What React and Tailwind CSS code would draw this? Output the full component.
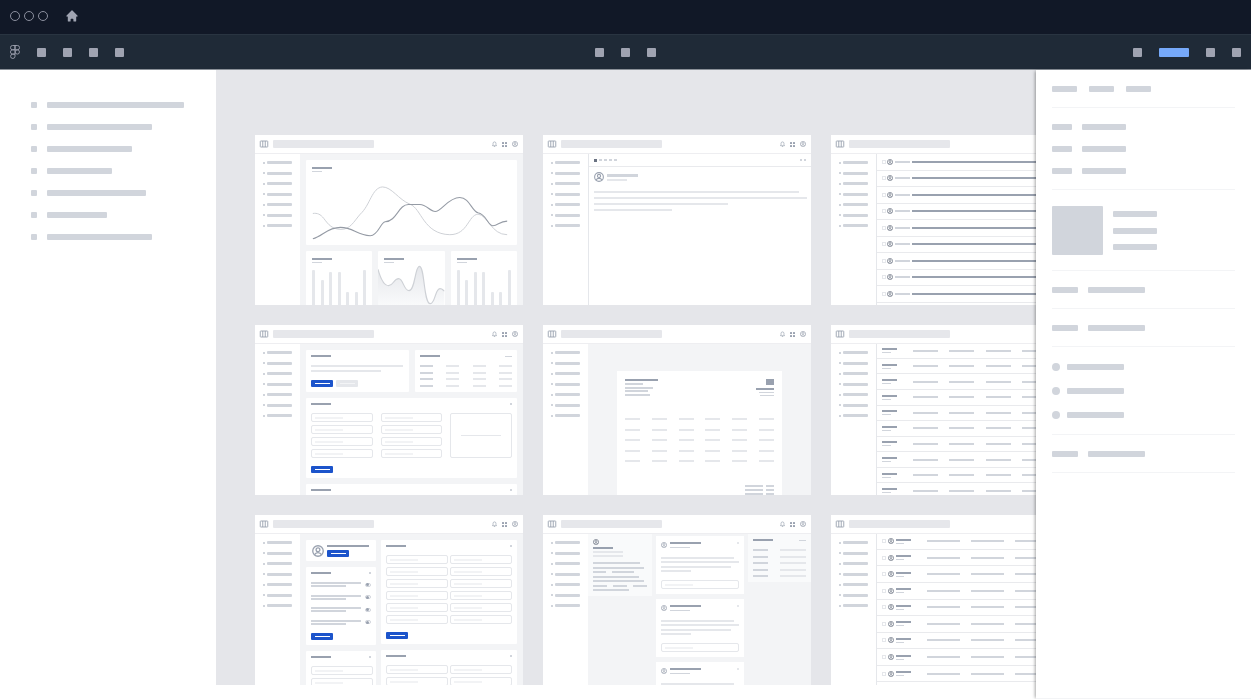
import clsx from 'clsx';

const LAYERS = ['w-[137px]', 'w-[105px]', 'w-[85px]', 'w-[65px]', 'w-[99px]', 'w-[60px]', 'w-[105px]'];

const range = n => Array.from({ length: n }, (_, i) => i);

/* ---------- small pieces ---------- */

function Bar({ className }) {
  return <span className={clsx('block shrink-0', className)} />;
}

function Avatar({ className }) {
  return (
    <svg viewBox="0 0 24 24" fill="none" stroke="currentColor" strokeWidth="2.6" className={clsx('shrink-0', className)}>
      <circle cx="12" cy="12" r="10.5" />
      <circle cx="12" cy="9.5" r="3.8" />
      <path d="M5 19.5c1.5-3.2 4-4.3 7-4.3s5.500 1.100 7 4.300" />
    </svg>
  );
}

function HomeIcon() {
  return (
    <svg viewBox="0 0 20 20" fill="currentColor" className="size-[14px]">
      <path d="M10.707 2.293a1 1 0 00-1.414 0l-7 7a1 1 0 001.414 1.414L4 10.414V17a1 1 0 001 1h2a1 1 0 001-1v-2a1 1 0 011-1h2a1 1 0 011 1v2a1 1 0 001 1h2a1 1 0 001-1v-6.586l.293.293a1 1 0 001.414-1.414l-7-7z" />
    </svg>
  );
}

function FigmaIcon() {
  return (
    <svg viewBox="0 0 20 28" fill="none" stroke="currentColor" strokeWidth="1.8" className="h-[14px] w-[10px] shrink-0">
      <path d="M10 1H5.200a4.300 4.300 0 0 0 0 8.600H10z" />
      <path d="M10 1h4.800a4.300 4.300 0 0 1 0 8.600H10z" />
      <path d="M10 9.600H5.200a4.300 4.300 0 0 0 0 8.600H10z" />
      <circle cx="14.600" cy="13.900" r="4.300" />
      <path d="M10 18.200H5.200a4.400 4.400 0 1 0 4.800 4.400z" />
    </svg>
  );
}

function LogoIcon() {
  return (
    <svg viewBox="0 0 16 12" fill="none" stroke="currentColor" strokeWidth="1.8" className="h-[6px] w-[8px] shrink-0 overflow-visible text-gray-400">
      <rect x="0.500" y="0" width="15" height="12" rx="1" />
      <path d="M5.500 0v12M10.500 0v12" />
    </svg>
  );
}

function BellIcon() {
  return (
    <svg viewBox="0 0 12 14" fill="none" stroke="currentColor" strokeWidth="1.6" className="h-[6px] w-[5px]">
      <path d="M1 11h10L9.500 8.500V5.500a3.500 3.500 0 0 0-7 0v3zM4.500 13h3" />
    </svg>
  );
}

function AppsIcon() {
  return (
    <svg viewBox="0 0 10 10" fill="currentColor" className="size-[5px]">
      <rect width="4" height="4" rx="1" />
      <rect x="6" width="4" height="4" rx="1" />
      <rect y="6" width="4" height="4" rx="1" />
      <rect x="6" y="6" width="4" height="4" rx="1" />
    </svg>
  );
}

function ToolButton() {
  return <button type="button" className="size-[9px] shrink-0 rounded-[1px] bg-[#9fa3b1]" />;
}

function PrimaryButton() {
  return (
    <button type="button" className="flex h-[7px] w-[22px] shrink-0 items-center justify-center rounded-[1px] bg-[#1c54cb]">
      <Bar className="h-px w-[15px] bg-white" />
    </button>
  );
}

function Field({ className }) {
  return (
    <label className={clsx('relative block', className)}>
      <input type="text" className="block size-full rounded-[2px] border border-gray-200 bg-white" />
      <span className="absolute left-[4px] top-1/2 h-px w-[28px] -translate-y-1/2 bg-gray-200" />
    </label>
  );
}

function Check() {
  return <input type="checkbox" className="block size-[4px] shrink-0 appearance-none border border-gray-200" />;
}

function CardTitle() {
  return (
    <div className="flex items-center justify-between">
      <Bar className="h-[2px] w-[20px] bg-gray-400" />
      <Bar className="size-[2px] bg-gray-300" />
    </div>
  );
}

/* ---------- artboard shell ---------- */

function Artboard({ className, children }) {
  return (
    <article className="flex h-[170px] flex-col overflow-hidden bg-white">
      <header className="flex h-[19px] shrink-0 items-center border-b border-[#eeeef1] px-[5px]">
        <LogoIcon />
        <Bar className="ml-[5px] h-[8px] w-[101px] rounded-[1px] bg-[#e6e7eb]" />
        <div className="ml-auto flex items-center gap-[5px] text-gray-400">
          <BellIcon />
          <AppsIcon />
          <Avatar className="size-[6px]" />
        </div>
      </header>
      <div className="flex min-h-0 flex-1">
        <nav className="w-[45px] shrink-0 pl-[8px] pt-[7px]">
          <ul className="flex h-[66px] flex-col justify-between">
            {range(7).map(i => (
              <li key={i} className="flex items-center gap-[2px]">
                <Bar className="size-[2px] bg-gray-300" />
                <Bar className="h-[3px] w-[25px] rounded-[1px] bg-gray-300" />
              </li>
            ))}
          </ul>
        </nav>
        <div className={clsx('min-w-0 flex-1 overflow-hidden', className)}>{children}</div>
      </div>
    </article>
  );
}

/* ---------- dashboard ---------- */

function ChartHeading() {
  return (
    <div className="flex flex-col gap-[2px]">
      <Bar className="h-[2px] w-[20px] bg-gray-400" />
      <Bar className="h-px w-[10px] bg-gray-300" />
    </div>
  );
}

function BarCard() {
  const heights = ['h-[35px]', 'h-[25px]', 'h-[33px]', 'h-[33px]', 'h-[13px]', 'h-[13px]', 'h-[35px]'];
  return (
    <div className="flex flex-col rounded-t-[1px] bg-white px-[6px] pt-[7px]">
      <ChartHeading />
      <div className="flex flex-1 items-end justify-between">
        {heights.map((h, i) => <Bar key={i} className={clsx('w-[3px] rounded-t-[1px] bg-gray-200', h)} />)}
      </div>
    </div>
  );
}

function DashboardBoard() {
  return (
    <Artboard className="flex flex-col gap-[6px] bg-gray-100 px-[6px] pt-[6px]">
      <div className="shrink-0 rounded-[1px] bg-white px-[6px] pb-[5px] pt-[7px]">
        <ChartHeading />
        <svg viewBox="186 140 597 190" fill="none" className="mt-[5px] h-[63px] w-full">
          <path
            d="M187 250C200 248 210 252 220 265C235 285 245 297 272 298C300 298 310 275 330 252C360 225 365 172 397 170C425 170 445 208 480 222C515 235 520 312 600 314C655 314 655 255 685 252C715 255 725 314 773 314"
            stroke="#ced1d6"
            strokeWidth="3"
          />
          <path
            d="M187 326C215 320 230 292 270 292C310 292 320 316 360 317C385 316 390 278 405 275C440 274 445 223 475 223L510 223C530 223 540 244 556 244C575 244 595 202 630 202C660 202 665 242 685 248C710 252 715 287 730 287C745 287 750 273 773 273"
            stroke="#959ba5"
            strokeWidth="3.200"
          />
        </svg>
      </div>
      <div className="grid min-h-0 flex-1 grid-cols-3 gap-[6px]">
        <BarCard />
        <div className="flex flex-col rounded-t-[1px] bg-white pt-[7px]">
          <div className="px-[6px]"><ChartHeading /></div>
          <svg viewBox="386 399 199 126" preserveAspectRatio="none" fill="none" className="mt-auto h-[42px] w-full">
            <defs>
              <linearGradient id="areaFill" x1="0" y1="0" x2="0" y2="1">
                <stop offset="0" stopColor="#e5e7eb" />
                <stop offset="1" stopColor="#f9fafb" />
              </linearGradient>
            </defs>
            <path
              d="M386 418C395 450 405 467 418 467C432 467 433 446 448 446C462 446 463 482 479 482C497 482 497 409 510 409C527 409 522 521 543 521C558 521 557 476 572 476C580 476 582 482 585 483V525H386Z"
              fill="url(#areaFill)"
            />
            <path
              d="M386 418C395 450 405 467 418 467C432 467 433 446 448 446C462 446 463 482 479 482C497 482 497 409 510 409C527 409 522 521 543 521C558 521 557 476 572 476C580 476 582 482 585 483"
              stroke="#ced1d6"
              strokeWidth="3.500"
            />
          </svg>
        </div>
        <BarCard />
      </div>
    </Artboard>
  );
}

/* ---------- mail ---------- */

function MessageBoard() {
  return (
    <Artboard className="border-l border-gray-200">
      <div className="flex h-[13px] items-center gap-[2px] border-b border-[#e9eaed] px-[5px]">
        <Bar className="size-[3px] bg-gray-500" />
        {range(4).map(i => <Bar key={i} className="h-[2px] w-[3px] bg-gray-300" />)}
        <Bar className="ml-auto size-[2px] bg-gray-300" />
        <Bar className="size-[2px] bg-gray-300" />
      </div>
      <div className="px-[5px] pt-[5px]">
        <div className="flex items-center gap-[3px]">
          <Avatar className="size-[10px] text-gray-400" />
          <div className="flex flex-col gap-[2px]">
            <Bar className="h-[3px] w-[31px] bg-gray-300" />
            <Bar className="h-[2px] w-[20px] bg-gray-200" />
          </div>
        </div>
        <div className="mt-[9px] flex flex-col gap-[4px]">
          <Bar className="h-[2px] w-[205px] bg-gray-200" />
          <Bar className="h-[2px] w-[213px] bg-gray-200" />
          <Bar className="h-[2px] w-[134px] bg-gray-200" />
          <Bar className="h-[2px] w-[78px] bg-gray-200" />
        </div>
      </div>
    </Artboard>
  );
}

function InboxBoard() {
  return (
    <Artboard className="border-l border-gray-200">
      <ul className="flex h-[165px] flex-col">
        {range(10).map(i => (
          <li key={i} className="flex flex-1 items-center border-b border-[#e9eaed] pl-[5px]">
            <Check />
            <Avatar className="ml-px size-[6px] text-gray-500" />
            <Bar className="ml-[2px] h-[2px] w-[15px] bg-gray-300" />
            <span className="ml-[2px] block h-[2px] flex-1 bg-gray-400" />
          </li>
        ))}
      </ul>
    </Artboard>
  );
}

/* ---------- billing ---------- */

function BillingBoard() {
  return (
    <Artboard className="bg-gray-100 px-[6px] pt-[6px]">
      <div className="grid grid-cols-2 gap-[6px]">
        <div className="h-[42px] rounded-[1px] bg-white p-[5px]">
          <Bar className="h-[2px] w-[20px] bg-gray-400" />
          <Bar className="mt-[8px] h-[2px] w-[92px] bg-gray-200" />
          <Bar className="mt-[3px] h-[2px] w-[70px] bg-gray-200" />
          <div className="mt-[8px] flex gap-[3px]">
            <PrimaryButton />
            <button type="button" className="flex h-[7px] w-[22px] items-center justify-center rounded-[1px] bg-gray-200">
              <Bar className="h-px w-[15px] bg-gray-100" />
            </button>
          </div>
        </div>
        <div className="h-[42px] rounded-[1px] bg-white p-[5px]">
          <div className="flex items-center justify-between">
            <Bar className="h-[2px] w-[20px] bg-gray-400" />
            <Bar className="h-px w-[7px] bg-gray-300" />
          </div>
          <div className="mt-[8px] flex h-[22px] flex-col justify-between">
            {range(4).map(i => (
              <div key={i} className="flex justify-between">
                <Bar className="h-[2px] w-[13px] bg-gray-300" />
                <Bar className="h-[2px] w-[13px] bg-gray-200" />
                <Bar className="h-[2px] w-[13px] bg-gray-200" />
                <Bar className="h-[2px] w-[13px] bg-gray-200" />
              </div>
            ))}
          </div>
        </div>
      </div>
      <div className="mt-[6px] h-[80px] rounded-[1px] bg-white p-[5px]">
        <CardTitle />
        <div className="mt-[8px] grid grid-cols-3 gap-[8px]">
          {range(2).map(col => (
            <div key={col} className="flex flex-col gap-[3px]">
              {range(4).map(i => <Field key={i} className="h-[9px]" />)}
            </div>
          ))}
          <div className="flex items-center justify-center rounded-[2px] border border-gray-200">
            <Bar className="h-px w-[40px] bg-gray-200" />
          </div>
        </div>
        <div className="mt-[8px] flex"><PrimaryButton /></div>
      </div>
      <div className="mt-[6px] h-[80px] rounded-[1px] bg-white p-[5px]">
        <CardTitle />
      </div>
    </Artboard>
  );
}

/* ---------- invoice ---------- */

function InvoiceBoard() {
  return (
    <Artboard className="bg-gray-100">
      <div className="mx-auto mt-[27px] h-[140px] w-[165px] bg-white p-[8px]">
        <div className="flex justify-between">
          <div className="flex h-[17px] flex-col justify-between">
            <Bar className="h-[2px] w-[33px] bg-gray-400" />
            <Bar className="h-[2px] w-[18px] bg-gray-300" />
            <Bar className="h-[2px] w-[28px] bg-gray-300" />
            <Bar className="h-[2px] w-[23px] bg-gray-300" />
            <Bar className="h-[2px] w-[25px] bg-gray-300" />
          </div>
          <div className="flex flex-col items-end">
            <Bar className="h-[6px] w-[8px] bg-gray-400" />
            <Bar className="mt-[3px] h-[2px] w-[18px] bg-gray-400" />
            <Bar className="mt-[2px] h-px w-[15px] bg-gray-300" />
            <Bar className="mt-[2px] h-px w-[14px] bg-gray-300" />
          </div>
        </div>
        <div className="mt-[22px] flex h-[44px] flex-col justify-between">
          {range(5).map(row => (
            <div key={row} className="flex justify-between">
              {range(6).map(i => <Bar key={i} className="h-[2px] w-[15px] bg-gray-200" />)}
            </div>
          ))}
        </div>
        <div className="mt-[23px] flex flex-col gap-[2px]">
          {range(3).map(i => (
            <div key={i} className="flex justify-end gap-[3px]">
              <Bar className="h-[2px] w-[18px] bg-gray-300" />
              <Bar className="h-[2px] w-[8px] bg-gray-300" />
            </div>
          ))}
        </div>
      </div>
    </Artboard>
  );
}

/* ---------- tables ---------- */

function ProductsBoard() {
  return (
    <Artboard className="border-l border-gray-200">
      <table className="h-[155px] w-[218px] table-fixed border-collapse">
        <colgroup>
          <col className="w-[36px]" />
        </colgroup>
        <tbody>
          {range(10).map(row => (
            <tr key={row} className="border-b border-[#e9eaed]">
              <td className="p-0 pl-[5px] align-middle">
                <Bar className="h-[2px] w-[15px] bg-gray-400" />
                <Bar className="mt-[2px] h-px w-[9px] bg-gray-300" />
              </td>
              {range(5).map(i => (
                <td key={i} className="p-0 align-middle">
                  <Bar className="h-[2px] w-[25px] bg-gray-300" />
                </td>
              ))}
            </tr>
          ))}
        </tbody>
      </table>
    </Artboard>
  );
}

function UsersBoard() {
  return (
    <Artboard className="border-l border-gray-200">
      <table className="h-[165px] w-[226px] table-fixed border-collapse">
        <colgroup>
          <col className="w-[50px]" />
        </colgroup>
        <tbody>
          {range(10).map(row => (
            <tr key={row} className="border-b border-[#e9eaed]">
              <td className="p-0 pl-[5px] align-middle">
                <div className="flex items-center">
                  <Check />
                  <Avatar className="ml-[2px] size-[6px] text-gray-500" />
                  <div className="ml-[2px]">
                    <Bar className="h-[2px] w-[15px] bg-gray-400" />
                    <Bar className="mt-[2px] h-px w-[8px] bg-gray-300" />
                  </div>
                </div>
              </td>
              {range(4).map(i => (
                <td key={i} className="p-0 align-middle">
                  <Bar className="h-[2px] w-[33px] bg-gray-300" />
                </td>
              ))}
            </tr>
          ))}
        </tbody>
      </table>
    </Artboard>
  );
}

/* ---------- settings ---------- */

function Toggle() {
  return (
    <label className="flex h-[4px] w-[6px] items-center rounded-full border border-gray-300">
      <input type="checkbox" role="switch" className="block size-[3px] shrink-0 appearance-none rounded-full bg-gray-400" />
    </label>
  );
}

function FieldPairs({ rows }) {
  return (
    <div className="mt-[8px] grid grid-cols-2 gap-x-[2px] gap-y-[3px]">
      {range(rows * 2).map(i => <Field key={i} className="h-[9px]" />)}
    </div>
  );
}

function SettingsBoard() {
  return (
    <Artboard className="flex gap-[5px] bg-gray-100 px-[6px] pt-[6px]">
      <div className="flex w-[70px] shrink-0 flex-col gap-[6px]">
        <div className="flex h-[21px] shrink-0 items-center gap-[3px] rounded-[1px] bg-white pl-[6px]">
          <Avatar className="size-[12px] text-gray-400" />
          <div>
            <Bar className="h-[2px] w-[42px] bg-gray-400" />
            <div className="mt-[3px] flex"><PrimaryButton /></div>
          </div>
        </div>
        <div className="h-[78px] shrink-0 rounded-[1px] bg-white p-[5px]">
          <CardTitle />
          <div className="mt-[8px] flex h-[43px] flex-col justify-between">
            {range(4).map(i => (
              <div key={i} className="flex items-center justify-between">
                <div className="flex flex-col gap-px">
                  <Bar className="h-[2px] w-[50px] bg-gray-300" />
                  <Bar className="h-[2px] w-[35px] bg-gray-300" />
                </div>
                <Toggle />
              </div>
            ))}
          </div>
          <div className="mt-[8px] flex"><PrimaryButton /></div>
        </div>
        <div className="h-[60px] shrink-0 rounded-[1px] bg-white py-[5px] pl-[5px] pr-[3px]">
          <div className="pr-[2px]"><CardTitle /></div>
          <div className="mt-[8px] flex flex-col gap-[3px]">
            <Field className="h-[9px]" />
            <Field className="h-[9px]" />
          </div>
        </div>
      </div>
      <div className="flex min-w-0 flex-1 flex-col gap-[6px]">
        <div className="h-[104px] shrink-0 rounded-[1px] bg-white p-[5px]">
          <CardTitle />
          <FieldPairs rows={6} />
          <div className="mt-[8px] flex"><PrimaryButton /></div>
        </div>
        <div className="h-[60px] shrink-0 rounded-[1px] bg-white p-[5px]">
          <CardTitle />
          <FieldPairs rows={2} />
        </div>
      </div>
    </Artboard>
  );
}

/* ---------- feed ---------- */

function PostCard() {
  return (
    <div className="h-[58px] shrink-0 bg-white px-[5px] pt-[6px]">
      <div className="flex gap-[3px]">
        <Avatar className="size-[6px] text-gray-400" />
        <div className="flex flex-col gap-[3px]">
          <Bar className="h-[2px] w-[31px] bg-gray-400" />
          <Bar className="h-px w-[20px] bg-gray-300" />
        </div>
        <Bar className="ml-auto size-[2px] bg-gray-200" />
      </div>
      <div className="mt-[9px] flex h-[15px] flex-col justify-between">
        <Bar className="h-[2px] w-[73px] bg-gray-200" />
        <Bar className="h-[2px] w-[78px] bg-gray-200" />
        <Bar className="h-[2px] w-[70px] bg-gray-200" />
        <Bar className="h-[2px] w-[30px] bg-gray-200" />
      </div>
      <Field className="mt-[8px] h-[9px]" />
    </div>
  );
}

function FeedBoard() {
  return (
    <Artboard className="flex items-start gap-[4px] bg-gray-100">
      <div className="w-[64px] shrink-0 bg-gray-50 p-[5px]">
        <Avatar className="size-[6px] text-gray-500" />
        <Bar className="mt-[2px] h-[2px] w-[20px] bg-gray-400" />
        <Bar className="mt-[2px] h-[2px] w-[30px] bg-gray-200" />
        <Bar className="mt-[2px] h-[2px] w-[30px] bg-gray-200" />
        <div className="mt-[5px] flex h-[29px] flex-col justify-between">
          <Bar className="h-[2px] w-[47px] bg-gray-300" />
          <Bar className="h-[2px] w-[51px] bg-gray-300" />
          <div className="flex gap-[6px]">
            <Bar className="h-[2px] w-[13px] bg-gray-300" />
            <Bar className="h-[2px] w-[22px] bg-gray-300" />
          </div>
          <Bar className="h-[2px] w-[46px] bg-gray-300" />
          <Bar className="h-[2px] w-[51px] bg-gray-300" />
          <div className="flex gap-[6px]">
            <Bar className="h-[2px] w-[14px] bg-gray-300" />
            <Bar className="h-[2px] w-[14px] bg-gray-300" />
            <Bar className="h-[2px] w-[14px] bg-gray-300" />
          </div>
          <Bar className="h-[2px] w-[36px] bg-gray-300" />
        </div>
      </div>
      <div className="flex w-[88px] shrink-0 flex-col gap-[5px] pt-[2px]">
        <PostCard />
        <PostCard />
        <PostCard />
      </div>
      <div className="h-[48px] flex-1 bg-gray-50 p-[5px]">
        <div className="flex items-center justify-between">
          <Bar className="h-[2px] w-[20px] bg-gray-400" />
          <Bar className="h-px w-[7px] bg-gray-300" />
        </div>
        <div className="mt-[8px] flex h-[28px] flex-col justify-between">
          {range(5).map(i => (
            <div key={i} className="flex justify-between">
              <Bar className="h-[2px] w-[15px] bg-gray-300" />
              <Bar className="h-[2px] w-[26px] bg-gray-200" />
            </div>
          ))}
        </div>
      </div>
    </Artboard>
  );
}

/* ---------- editor chrome ---------- */

function TitleBar() {
  return (
    <div className="flex h-[34px] shrink-0 items-center bg-[#111827] px-[10px] pb-[2px]">
      <div className="flex gap-[4px]">
        {range(3).map(i => <button key={i} type="button" className="size-[10px] rounded-full border border-[#8b8f9e]" />)}
      </div>
      <button type="button" className="ml-[17px] text-[#9fa3b1]"><HomeIcon /></button>
    </div>
  );
}

function Toolbar() {
  return (
    <div className="flex h-[36px] shrink-0 items-center border-b border-t border-b-[#8a9098] border-t-[#293441] bg-[#1f2a37] px-[10px]">
      <div className="flex flex-1 items-center gap-[17px] text-[#9fa3b1]">
        <FigmaIcon />
        {range(4).map(i => <ToolButton key={i} />)}
      </div>
      <div className="flex gap-[17px]">
        {range(3).map(i => <ToolButton key={i} />)}
      </div>
      <div className="flex flex-1 items-center justify-end gap-[17px]">
        <ToolButton />
        <button type="button" className="h-[9px] w-[30px] rounded-[1px] bg-[#76a9fa]" />
        <ToolButton />
        <ToolButton />
      </div>
    </div>
  );
}

function LayersPanel() {
  return (
    <aside className="w-[216px] shrink-0 bg-white pl-[31px] pt-[32px]">
      <ul className="flex flex-col gap-4">
        {LAYERS.map((w, i) => (
          <li key={i} className="flex gap-[10px]">
            <Bar className="size-[6px] rounded-[1px] bg-gray-300" />
            <Bar className={clsx('h-[6px] rounded-[1px] bg-gray-300', w)} />
          </li>
        ))}
      </ul>
    </aside>
  );
}

function PropRow({ label, value }) {
  return (
    <div className="flex gap-[10px]">
      <Bar className={clsx('h-[6px] rounded-[1px] bg-gray-300', label)} />
      <Bar className={clsx('h-[6px] rounded-[1px] bg-gray-300', value)} />
    </div>
  );
}

function PropertiesPanel() {
  return (
    <aside className="relative w-[215px] shrink-0 self-stretch border-b border-gray-100 bg-white px-4 shadow-[-2px_0_3px_-1px_rgba(0,0,0,0.35)]">
      <div className="divide-y divide-gray-100">
        <div className="flex gap-3 pb-[15px] pt-4">
          {range(3).map(i => <Bar key={i} className="h-[6px] w-[25px] rounded-[1px] bg-gray-300" />)}
        </div>
        <div className="flex flex-col gap-4 pb-[15px] pt-4">
          {range(3).map(i => <PropRow key={i} label="w-[20px]" value="w-[44px]" />)}
        </div>
        <div className="flex items-center gap-[10px] pb-[15px] pt-4">
          <Bar className="h-[49px] w-[51px] rounded-[1px] bg-gray-300" />
          <div className="flex h-[39px] flex-col justify-between">
            {range(3).map(i => <Bar key={i} className="h-[6px] w-[44px] rounded-[1px] bg-gray-300" />)}
          </div>
        </div>
        <div className="pb-[15px] pt-4"><PropRow label="w-[26px]" value="w-[57px]" /></div>
        <div className="pb-[15px] pt-4"><PropRow label="w-[26px]" value="w-[57px]" /></div>
        <div className="flex flex-col gap-4 pb-[15px] pt-4">
          {range(3).map(i => (
            <div key={i} className="flex items-center gap-[7px]">
              <Bar className="size-[8px] rounded-full bg-gray-300" />
              <Bar className="h-[6px] w-[57px] rounded-[1px] bg-gray-300" />
            </div>
          ))}
        </div>
        <div className="border-b border-b-gray-100 pb-[15px] pt-4"><PropRow label="w-[26px]" value="w-[57px]" /></div>
      </div>
    </aside>
  );
}

export default function App() {
  return (
    <div className="flex min-h-screen flex-col bg-white font-['Inter',sans-serif]">
      <TitleBar />
      <Toolbar />
      <div className="flex flex-1 items-start">
        <LayersPanel />
        <main className="min-w-0 flex-1 overflow-hidden bg-[#e5e6ea] pl-[39px] pt-[65px]">
          <div className="grid grid-cols-[repeat(3,268px)] gap-5">
            <DashboardBoard />
            <MessageBoard />
            <InboxBoard />
            <BillingBoard />
            <InvoiceBoard />
            <ProductsBoard />
            <SettingsBoard />
            <FeedBoard />
            <UsersBoard />
          </div>
        </main>
        <PropertiesPanel />
      </div>
    </div>
  );
}
